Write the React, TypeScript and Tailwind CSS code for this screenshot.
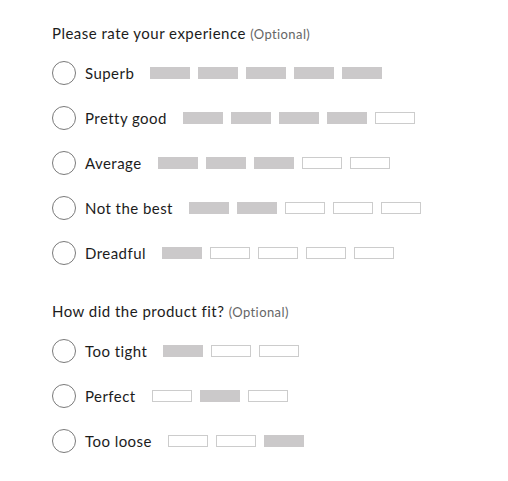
const experience = [
  { label: "Superb", filled: 5, total: 5 },
  { label: "Pretty good", filled: 4, total: 5 },
  { label: "Average", filled: 3, total: 5 },
  { label: "Not the best", filled: 2, total: 5 },
  { label: "Dreadful", filled: 1, total: 5 },
];

const fit = [
  { label: "Too tight", bars: [true, false, false] },
  { label: "Perfect", bars: [false, true, false] },
  { label: "Too loose", bars: [false, false, true] },
];

function Bars({ bars }: { bars: boolean[] }) {
  return (
    <div className="flex gap-2 ml-4">
      {bars.map((on, i) => (
        <span
          key={i}
          className={
            on
              ? "w-10 h-3 bg-[#cbc9ca]"
              : "w-10 h-3 bg-white border border-[#cccccc]"
          }
        />
      ))}
    </div>
  );
}

function Row({ label, bars }: { label: string; bars: boolean[] }) {
  return (
    <label className="flex items-center h-6">
      <span className="w-6 h-6 rounded-full border border-[#7a7a7a] bg-white shrink-0" />
      <span className="ml-[9px] text-[15px] tracking-[0.45px] text-[#1c1c1c] leading-6">
        {label}
      </span>
      <Bars bars={bars} />
    </label>
  );
}

function Heading({ title }: { title: string }) {
  return (
    <h2 className="text-[15px] leading-5 tracking-[0.48px] text-[#1c1c1c]">
      {title}{" "}
      <span className="text-[13px] tracking-[0.4px] text-[#666]">(Optional)</span>
    </h2>
  );
}

export default function App() {
  return (
    <div
      className="min-h-screen bg-white px-[52px] pt-[23px]"
      style={{ fontFamily: "Lato, 'Open Sans', sans-serif" }}
    >
      <section>
        <Heading title="Please rate your experience" />
        <div className="mt-[17px] flex flex-col gap-[21px]">
          {experience.map((r) => (
            <Row
              key={r.label}
              label={r.label}
              bars={Array.from({ length: r.total }, (_, i) => i < r.filled)}
            />
          ))}
        </div>
      </section>

      <section className="mt-[36px]">
        <Heading title="How did the product fit?" />
        <div className="mt-[17px] flex flex-col gap-[21px]">
          {fit.map((r) => (
            <Row key={r.label} label={r.label} bars={r.bars} />
          ))}
        </div>
      </section>
    </div>
  );
}
